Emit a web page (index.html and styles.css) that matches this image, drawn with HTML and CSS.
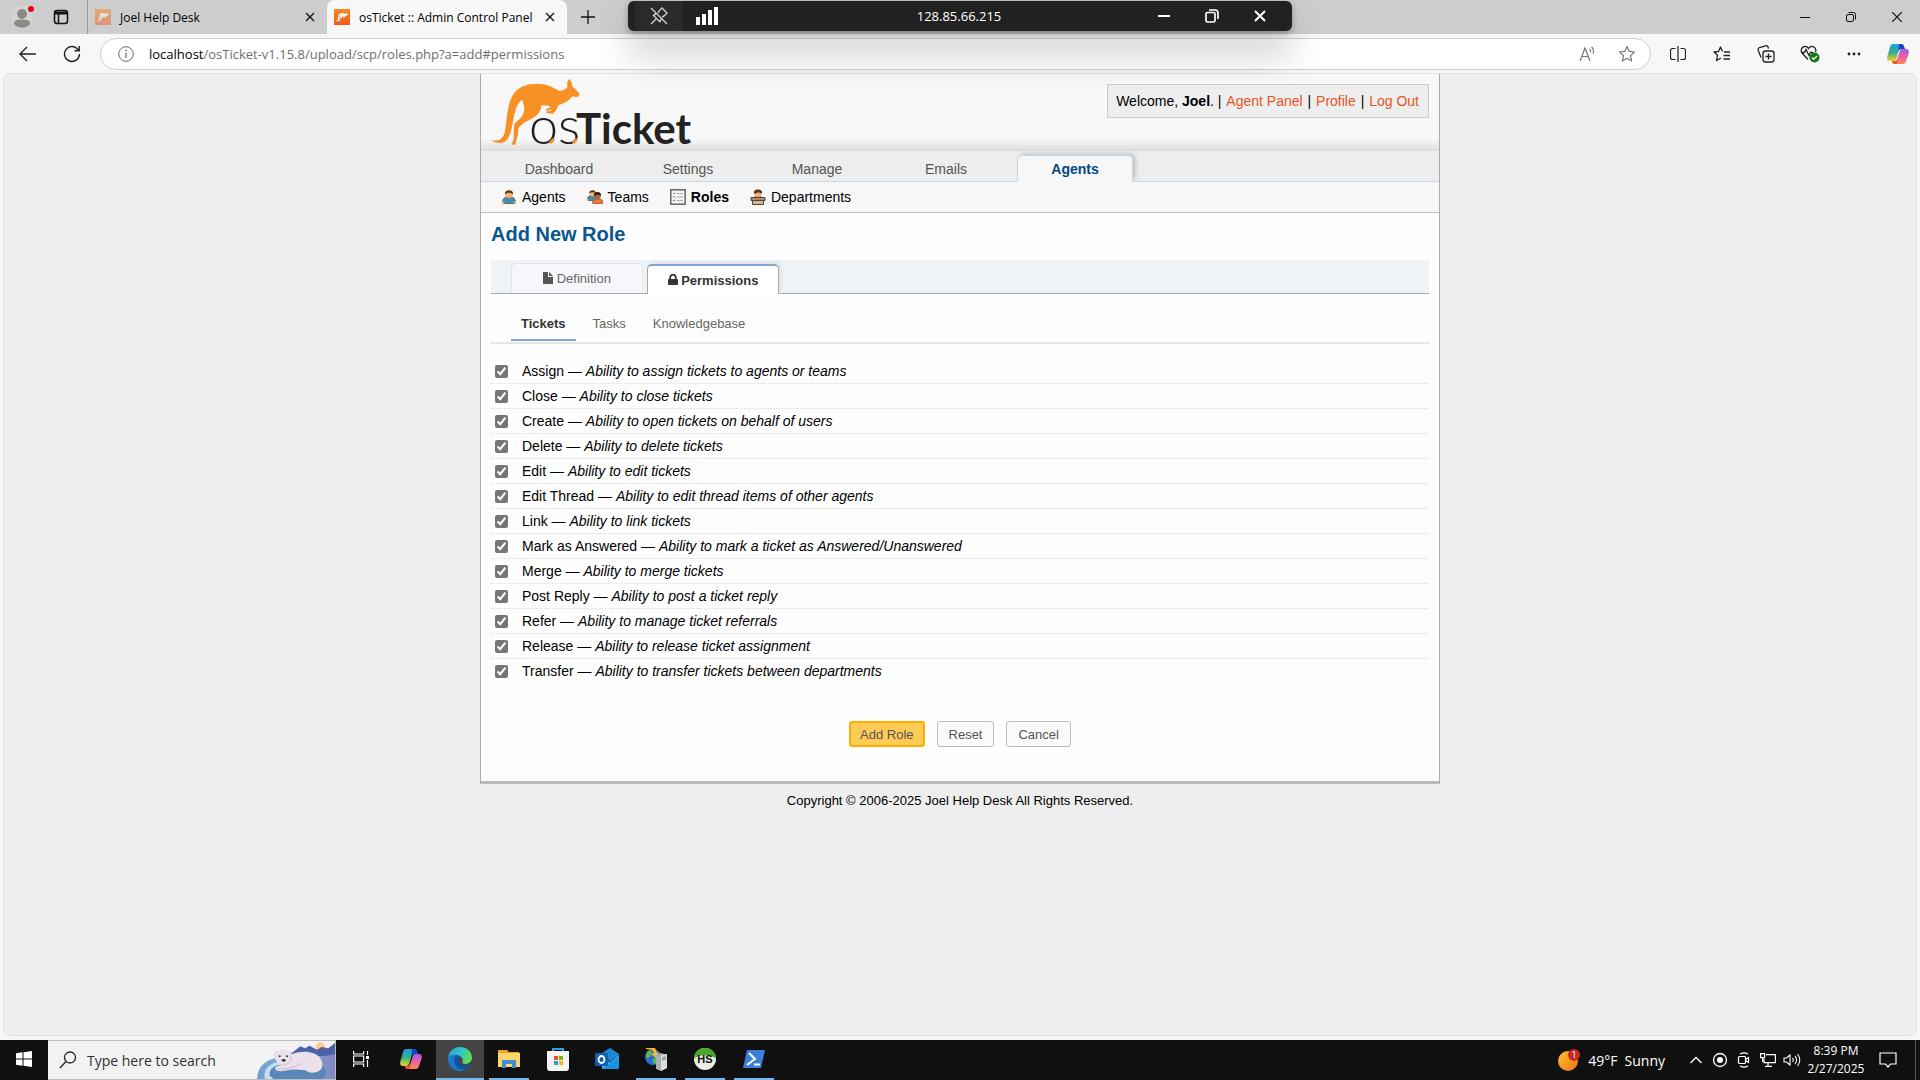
FILE: index.html
```html
<!DOCTYPE html>
<html lang="en">
<head>
<meta charset="utf-8">
<title>osTicket :: Admin Control Panel</title>
<link rel="stylesheet" href="styles.css">
</head>
<body>
<svg class="defs" aria-hidden="true">
  <defs>
    <symbol id="roo" viewBox="30 24 272 204">
      <path d="M30 209C52 216 68 210 74 185C81 150 80 105 98 75C114 49 142 40 175 41C204 42 218 52 236 62C250 63 260 58 262 49C259 39 263 31 267 27C273 32 276 40 276 49C285 55 290 63 298 71C298 82 288 82 278 79C270 86 264 94 250 100L234 106C231 117 226 126 218 131L202 130C197 128 196 124 201 124L212 123L215 118L202 122C194 122 196 117 201 116C209 115 211 110 207 107L184 106C181 126 170 140 151 148C136 156 121 164 114 178C116 196 108 208 106 222C103 227 96 225 95 221C104 205 99 184 102 164C109 151 128 145 131 124C136 108 126 101 128 89C112 94 105 119 99 151C93 190 85 218 61 219C50 219 38 215 30 209Z"/>
    </symbol>
    <linearGradient id="fav" x1="0" y1="0" x2="0" y2="1"><stop offset="0" stop-color="#f58a1f"/><stop offset="1" stop-color="#f05a22"/></linearGradient>
    <symbol id="favicon" viewBox="0 0 16 16">
      <rect width="16" height="16" fill="url(#fav)"/>
      <use href="#roo" x="2" y="2" width="12" height="12" fill="#fff" stroke="#fff" stroke-width="8"/>
    </symbol>
    <linearGradient id="cpA" x1="0" y1="0" x2="0" y2="1"><stop offset="0" stop-color="#1b9de8"/><stop offset=".5" stop-color="#37b08a"/><stop offset="1" stop-color="#f4cf1c"/></linearGradient>
    <linearGradient id="cpB" x1="0" y1="0" x2="0" y2="1"><stop offset="0" stop-color="#a15ce8"/><stop offset=".5" stop-color="#e95fa5"/><stop offset="1" stop-color="#ff8a4c"/></linearGradient>
    <symbol id="copilot" viewBox="0 0 24 24">
      <path d="M7 2h8c2 0 2.600 1 3.200 3l.6 2h-3c-2 0-3 1-3.600 3l-1.700 6c-.7 2-1.500 3-3.500 3H4C1.500 19 .6 17 1.300 14.500L4 5C4.700 3 5.500 2 7 2Z" fill="url(#cpA)"/>
      <path d="M13 2h2c2 0 2.600 1 3.200 3l.6 2h-3c-2 0-3 .8-3.600 2.500Z" fill="#1546c0"/>
      <path d="M17 22H9c-2 0-2.600-1-3.200-3h2.500c2 0 2.700-1 3.300-3l1.800-6c.6-2 1.400-3 3.400-3H20c2.500 0 3.400 2 2.700 4.500L20 19c-.7 2-1.500 3-3 3Z" fill="url(#cpB)"/>
      <path d="M11 22H9c-2 0-2.600-1-3.200-3h2.500c1.500 0 2.300-.6 2.900-2Z" fill="#f0512f"/>
    </symbol>
    <symbol id="agent" viewBox="0 0 14 14">
      <path d="M1 13c-1-3 1-5.500 3.500-6h5C12 7.500 14 10 13 13l-2 1H3Z" fill="#4d8aa8" stroke="#28546b" stroke-width=".8"/>
      <circle cx="7" cy="4.500" r="3.600" fill="#f0b27a"/>
      <path d="M3 4.500C2.500 1.500 4.500.3 7 .3s4.500 1.200 4 4.200C9.500 2.800 8 3 6 2.800 5 3 4 3.500 3 4.500Z" fill="#5b3413"/>
      <circle cx="1.300" cy="12.300" r="1.200" fill="#e8a46b"/><circle cx="12.700" cy="12.300" r="1.200" fill="#e8a46b"/>
    </symbol>
  </defs>
</svg>

<header class="tabstrip">
  <div class="lead">
    <button class="plain" aria-label="Profile">
      <svg width="26" height="26" viewBox="0 0 26 26"><circle cx="12" cy="13" r="11" fill="#d6d4d1"/><circle cx="12" cy="10" r="5" fill="#8d8a87"/><path d="M4 20c0-4 3-4.500 8-4.500s8 .5 8 4.500c-4 5-12 5-16 0Z" fill="#8d8a87"/><circle cx="21" cy="5" r="3" fill="#e30613"/></svg>
    </button>
    <button class="plain" aria-label="Workspaces">
      <svg width="16" height="16" viewBox="0 0 16 16" fill="none" stroke="#111" stroke-width="1.500"><rect x="1.500" y="1.500" width="13" height="13" rx="2.500"/><path d="M1.500 4h13" stroke-width="3"/><path d="M5.500 4v10"/></svg>
    </button>
  </div>
  <div class="tab tab-idle">
    <svg class="faded" width="16" height="16"><use href="#favicon"/></svg>
    <span class="tab-title">Joel Help Desk</span>
    <button class="plain" aria-label="Close tab"><svg width="10" height="10" viewBox="0 0 10 10" stroke="#111" stroke-width="1.300"><path d="M1 1l8 8M9 1l-8 8"/></svg></button>
  </div>
  <div class="tab tab-current">
    <svg width="16" height="16"><use href="#favicon"/></svg>
    <span class="tab-title">osTicket :: Admin Control Panel</span>
    <button class="plain" aria-label="Close tab"><svg width="10" height="10" viewBox="0 0 10 10" stroke="#111" stroke-width="1.300"><path d="M1 1l8 8M9 1l-8 8"/></svg></button>
  </div>
  <button class="plain new-tab" aria-label="New tab"><svg width="14" height="14" viewBox="0 0 14 14" stroke="#111" stroke-width="1.300"><path d="M7 0v14M0 7h14"/></svg></button>
  <div class="window-buttons">
    <button class="plain" aria-label="Minimize"><svg width="10" height="10" viewBox="0 0 10 10" stroke="#111"><path d="M0 5.500h10"/></svg></button>
    <button class="plain" aria-label="Restore"><svg width="10" height="10" viewBox="0 0 10 10" fill="none" stroke="#111"><rect x=".5" y="2.500" width="7" height="7" rx="1.500"/><path d="M2.500.5h5a2 2 0 0 1 2 2v5"/></svg></button>
    <button class="plain" aria-label="Close"><svg width="10" height="10" viewBox="0 0 10 10" stroke="#111" stroke-width="1.200"><path d="M0 0l10 10M10 0L0 10"/></svg></button>
  </div>
</header>

<div class="toolbar">
  <button class="plain nav-button" aria-label="Back"><svg width="18" height="16" viewBox="0 0 18 16" fill="none" stroke="#222" stroke-width="1.400"><path d="M17 8H1.500M8 1L1 8l7 7"/></svg></button>
  <button class="plain nav-button" aria-label="Refresh"><svg width="18" height="18" viewBox="0 0 18 18" fill="none" stroke="#222" stroke-width="1.400"><path d="M16.500 9a7.500 7.500 0 1 1-2.500-5.600L16 5.500M16.200 1v4.700h-4.700"/></svg></button>
  <div class="address">
    <svg width="16" height="16" viewBox="0 0 16 16" fill="none" stroke="#6b6b6b"><circle cx="8" cy="8" r="7.300"/><path d="M8 7v5" stroke-width="1.300"/><circle cx="8" cy="4.500" r=".5" fill="#6b6b6b"/></svg>
    <span class="url"><span class="host">localhost</span>/osTicket-v1.15.8/upload/scp/roles.php?a=add#permissions</span>
    <button class="plain" aria-label="Read aloud"><svg width="18" height="16" viewBox="0 0 18 16" fill="none" stroke="#777" stroke-width="1.200"><path d="M1 15L6 2l5 13M3 10.500h6M10.500 3c1 .7 1.300 2 1 3.500M12.500 1c2 1.500 2.500 4 1.500 6.500"/></svg></button>
    <button class="plain" aria-label="Add to favorites"><svg width="18" height="18" viewBox="0 0 18 18" fill="none" stroke="#777" stroke-width="1.200" stroke-linejoin="round"><path d="M9 1.500l2.200 4.900 5.300.6-4 3.600 1.100 5.300L9 13.200l-4.600 2.700 1.100-5.300-4-3.600 5.300-.6Z"/></svg></button>
  </div>
  <div class="tools">
    <button class="plain" aria-label="Split screen"><svg width="16" height="16" viewBox="0 0 16 16" fill="none" stroke="#222" stroke-width="1.200"><path d="M5.500 2.500H2.500a2 2 0 0 0-2 2v7a2 2 0 0 0 2 2h3M10.500 2.500h3a2 2 0 0 1 2 2v7a2 2 0 0 1-2 2h-3M8 0v16"/></svg></button>
    <button class="plain" aria-label="Favorites"><svg width="18" height="16" viewBox="0 0 18 16" fill="none" stroke="#222" stroke-width="1.300" stroke-linejoin="round"><path d="M9.500 5.500L7.500 1l-2 4.500L1 6l3.500 3.200-1 5.300 4.500-2.500M11 6h6M10.500 9.500H17M10.500 13H17"/></svg></button>
    <button class="plain" aria-label="Collections"><svg width="18" height="18" viewBox="0 0 18 18" fill="none" stroke="#222" stroke-width="1.300"><rect x="6" y="6" width="11" height="11" rx="2.500"/><path d="M11.500 8.500v6M8.500 11.500h6M4 12.500L1.300 5.500C.8 4 1.300 3 2.500 2.500L8.500.8C10 .4 11 1 11.500 3.500"/></svg></button>
    <button class="plain" aria-label="Browser essentials"><svg width="20" height="18" viewBox="0 0 20 18" fill="none" stroke="#222" stroke-width="1.300"><path d="M8 14.500L2 8C.5 6 1 3 3.500 1.800 5.500 1 7.500 2 8.500 3.500 9.500 2 11.500 1 13.500 1.800 15.500 3 16.300 5 15.500 7M1.500 7.500h3l1.500-3 3 6 1.500-3H13"/><circle cx="14.500" cy="12.500" r="5" fill="#107c10" stroke="none"/><path d="M12 12.500l1.800 1.800 3.200-3.300" stroke="#fff"/></svg></button>
    <button class="plain" aria-label="Settings and more"><svg width="14" height="4" viewBox="0 0 14 4" fill="#222"><circle cx="2" cy="2" r="1.400"/><circle cx="7" cy="2" r="1.400"/><circle cx="12" cy="2" r="1.400"/></svg></button>
    <button class="plain" aria-label="Copilot"><svg width="24" height="24"><use href="#copilot"/></svg></button>
  </div>
</div>

<div class="remote-bar">
  <button class="plain pin" aria-label="Unpin"><svg width="18" height="18" viewBox="0 0 18 18" fill="none" stroke="#ccc" stroke-width="1.400"><path d="M1 1l16 16M1 17l5-5M3 8l7 7M3.500 8L6 7M10 15l1-3M9 4l3-3 5 5-3 3M9 4L8 6M14 9l-2 1"/></svg></button>
  <svg class="signal" width="22" height="18" viewBox="0 0 22 18" fill="#fff"><path d="M0 10h4v8H0zM6 7h4v11H6zM12 3h4v15h-4zM18 0h4v18h-4z"/></svg>
  <span class="remote-host">128.85.66.215</span>
  <button class="plain remote-button" aria-label="Minimize"><svg width="12" height="12" viewBox="0 0 12 12" stroke="#fff" stroke-width="2"><path d="M0 6h12"/></svg></button>
  <button class="plain remote-button" aria-label="Restore"><svg width="14" height="14" viewBox="0 0 14 14" fill="none" stroke="#fff" stroke-width="1.700"><rect x="1" y="3.500" width="9" height="9.500" rx="1.500"/><path d="M4 1h6a3 3 0 0 1 3 3v6"/></svg></button>
  <button class="plain remote-button" aria-label="Close"><svg width="12" height="12" viewBox="0 0 12 12" stroke="#fff" stroke-width="2"><path d="M1 1l10 10M11 1L1 11"/></svg></button>
</div>

<main class="viewport">
  <div class="container">
    <div class="masthead">
      <a class="logo" href="#" aria-label="osTicket">
        <svg width="210" height="72" viewBox="0 0 210 72">
          <use href="#roo" width="91" height="68" fill="#f79125"/>
          <text class="logo-os" x="39" y="66">os</text>
          <text class="logo-ticket" x="86" y="66">Ticket</text>
          <path d="M60 65l4-4M83 65l4-4" stroke="#f79125" stroke-width="3"/>
        </svg>
      </a>
      <p class="welcome">Welcome, <strong>Joel</strong>. | <a href="#">Agent Panel</a> | <a href="#">Profile</a> | <a href="#">Log Out</a></p>
    </div>
    <nav class="main-nav">
      <a href="#">Dashboard</a>
      <a href="#">Settings</a>
      <a href="#">Manage</a>
      <a href="#">Emails</a>
      <a class="active" href="#">Agents</a>
    </nav>
    <nav class="sub-nav">
      <a href="#"><svg width="16" height="14"><use href="#agent"/></svg>Agents</a>
      <a href="#"><svg width="16" height="14" viewBox="0 0 16 14"><use href="#agent" width="11" height="11"/><path d="M6 14c-1-3 1-5 3-5h3c3 0 4 2 4 4l-2 1Z" fill="#ee7538" stroke="#a3431a" stroke-width=".8"/><circle cx="10.500" cy="6" r="3.200" fill="#a06a3c"/><path d="M7 6c-.5-3 1.500-4 3.500-4S14.500 3 14 6c-1-1.500-5-2-7 0Z" fill="#2e1c0e"/></svg>Teams</a>
      <a class="active" href="#"><svg width="16" height="16" viewBox="0 0 16 16" fill="none" stroke="#666"><rect x=".8" y=".8" width="14.400" height="14.400" fill="#f4f4f4" stroke-width="1.500"/><path d="M6.500 4.500H13M6.500 8H13M6.500 11.500H13" stroke="#aaa"/><path d="M3 4l1 1 1-1.500M3 7.500l1 1L5 7M3 11l1 1 1-1.500" stroke-width=".8"/></svg>Roles</a>
      <a href="#"><svg width="16" height="16" viewBox="0 0 16 16"><path d="M4 9l1-2h6l1 2Z" fill="#d5632c"/><circle cx="8" cy="4.500" r="3.500" fill="#f0b27a"/><path d="M4 5C3.500 1.500 5.500.5 8 .5S12.500 1.500 12 5c-2-2-5-2-8 0Z" fill="#5b3413"/><path d="M1 8.500h14v3H1z" fill="#a58c72" stroke="#55412f"/><path d="M2.500 11.500h11v4h-11z" fill="#cbb59b" stroke="#55412f"/></svg>Departments</a>
    </nav>
    <form class="content">
      <h2>Add New Role</h2>
      <div class="tabs">
        <a href="#"><svg width="10" height="12" viewBox="0 0 10 12" fill="#555"><path d="M0 0h5v5h5v7H0ZM6 0l4 4H6Z"/></svg> Definition</a>
        <a class="active" href="#"><svg width="10" height="12" viewBox="0 0 10 12"><rect x="0" y="5" width="10" height="6" rx="1" fill="#333"/><path d="M2.200 6V3.500a2.800 2.800 0 0 1 5.600 0V6" fill="none" stroke="#333" stroke-width="1.800"/></svg> Permissions</a>
      </div>
      <div class="subtabs">
        <a class="active" href="#">Tickets</a>
        <a href="#">Tasks</a>
        <a href="#">Knowledgebase</a>
      </div>
      <ul class="permissions">
        <li><label><input type="checkbox" checked><span>Assign — <em>Ability to assign tickets to agents or teams</em></span></label></li>
        <li><label><input type="checkbox" checked><span>Close — <em>Ability to close tickets</em></span></label></li>
        <li><label><input type="checkbox" checked><span>Create — <em>Ability to open tickets on behalf of users</em></span></label></li>
        <li><label><input type="checkbox" checked><span>Delete — <em>Ability to delete tickets</em></span></label></li>
        <li><label><input type="checkbox" checked><span>Edit — <em>Ability to edit tickets</em></span></label></li>
        <li><label><input type="checkbox" checked><span>Edit Thread — <em>Ability to edit thread items of other agents</em></span></label></li>
        <li><label><input type="checkbox" checked><span>Link — <em>Ability to link tickets</em></span></label></li>
        <li><label><input type="checkbox" checked><span>Mark as Answered — <em>Ability to mark a ticket as Answered/Unanswered</em></span></label></li>
        <li><label><input type="checkbox" checked><span>Merge — <em>Ability to merge tickets</em></span></label></li>
        <li><label><input type="checkbox" checked><span>Post Reply — <em>Ability to post a ticket reply</em></span></label></li>
        <li><label><input type="checkbox" checked><span>Refer — <em>Ability to manage ticket referrals</em></span></label></li>
        <li><label><input type="checkbox" checked><span>Release — <em>Ability to release ticket assignment</em></span></label></li>
        <li><label><input type="checkbox" checked><span>Transfer — <em>Ability to transfer tickets between departments</em></span></label></li>
      </ul>
      <div class="actions">
        <button class="primary" type="submit">Add Role</button>
        <button type="reset">Reset</button>
        <button type="button">Cancel</button>
      </div>
    </form>
  </div>
  <footer class="copyright">Copyright © 2006-2025 Joel Help Desk All Rights Reserved.</footer>
</main>

<div class="taskbar">
  <button class="plain task start" aria-label="Start"><svg width="16" height="16" viewBox="0 0 16 16" fill="#fff"><path d="M0 2.300L6.500 1.300v6.200H0ZM7.500 1.200L16 0v7.500H7.500ZM0 8.500h6.500v6.200L0 13.700ZM7.500 8.500H16V16l-8.500-1.200Z"/></svg></button>
  <label class="search">
    <svg width="18" height="18" viewBox="0 0 18 18" fill="none" stroke="#222" stroke-width="1.300"><circle cx="11" cy="6.500" r="5.500"/><path d="M7 10.500L1 17"/></svg>
    <input type="text" placeholder="Type here to search" aria-label="Search">
    <svg class="bear" width="78" height="38" viewBox="0 0 234 114">
      <defs><linearGradient id="ice" x1="0" y1="0" x2="1" y2="0"><stop offset="0" stop-color="#6f9fd0"/><stop offset=".5" stop-color="#8fb0dc"/><stop offset="1" stop-color="#7f86c4"/></linearGradient></defs>
      <circle cx="190" cy="18" r="14" fill="#ffc994"/>
      <path d="M100 40L130 16l14 6 14-8 22 12 14-8 20 4 20-16v44Z" fill="#4c62a8"/>
      <path d="M0 114C2 80 20 58 60 50h110l64-10v74Z" fill="url(#ice)"/>
      <path d="M24 114C16 90 34 66 66 62L90 72 60 114Z" fill="#c8dcf0"/>
      <path d="M38 104C34 80 60 70 84 70h100c30 10 30 30 10 44H50Z" fill="#5a86b8"/>
      <path d="M52 44C48 34 56 26 64 32 74 24 88 24 94 30 104 28 104 38 100 42 130 26 176 30 190 52 202 72 196 90 176 94 160 98 150 92 146 88 124 86 104 84 92 88 76 92 54 92 54 82 58 74 70 74 76 70 62 68 54 58 52 44Z" fill="#ece0ea"/>
      <circle cx="68" cy="46" r="3" fill="#333"/><circle cx="90" cy="46" r="3" fill="#333"/><ellipse cx="80" cy="58" rx="6" ry="4" fill="#333"/>
      <path d="M100 44c6 14 0 24-22 28M60 84c30 2 60-6 76-18" fill="none" stroke="#cbb9cf" stroke-width="3"/>
    </svg>
  </label>
  <button class="plain task task-view" aria-label="Task View"><svg width="16" height="16" viewBox="0 0 16 16" fill="none" stroke="#fff" stroke-width="1.200"><path d="M.6 0v3h10V0M.6 16v-3h10v3M.6 5h10v6H.6zM14.500 0v4M14.500 9v7"/><path d="M13 5h3v3h-3z" fill="#fff" stroke="none"/></svg></button>
  <button class="plain task" aria-label="Copilot"><svg width="24" height="24"><use href="#copilot"/></svg></button>
  <button class="plain task open focused" aria-label="Edge"><svg width="24" height="24" viewBox="0 0 24 24"><defs><linearGradient id="eg" x1="0" y1="0" x2="1" y2=".3"><stop offset="0" stop-color="#2a9fe0"/><stop offset=".6" stop-color="#2fc5c0"/><stop offset="1" stop-color="#62d95a"/></linearGradient></defs><path d="M12 0C19 0 24 5 24 10.500c0 4-3 6.500-7 6.500-2 0-3-.7-2.500-2 1-3-1-6-5-6C5 9 1 11 0 14 0 5 5 0 12 0Z" fill="url(#eg)"/><path d="M0 12C1 8 5 7 9 8c-3 2-3.500 6-1.500 9.500C9 21 13 23 18 22c-2 1.500-4 2-6 2C5 24 0 18.500 0 12Z" fill="#1878cc"/><path d="M9 8c-3 2-3.500 6-1.500 9.500C9.500 22 15 23.500 19 21.500c2-1 3.500-2.500 4-4-5 2.500-10 1.500-12-2-1-3 0-4.500 1.500-5.500-1-1.500-2.500-2-3.500-2Z" fill="#12539f"/></svg></button>
  <button class="plain task open" aria-label="File Explorer"><svg width="22" height="20" viewBox="0 0 22 20"><path d="M0 1h9l2 2h10v6H0Z" fill="#e9a523"/><path d="M0 4h22v14H0Z" fill="#ffd56a"/><path d="M4 19v-8h14v8h-4v-4H8v4Z" fill="#3f8fd6"/></svg></button>
  <button class="plain task" aria-label="Microsoft Store"><svg width="24" height="24" viewBox="0 0 24 24"><path d="M7 5V2h10v3" fill="none" stroke="#2aa1e6" stroke-width="2"/><path d="M1 4h22v17a3 3 0 0 1-3 3H4a3 3 0 0 1-3-3Z" fill="#f4f4f4"/><path d="M8 9h4v4H8z" fill="#e94b25"/><path d="M13 9h4v4h-4z" fill="#7cb900"/><path d="M8 14h4v4H8z" fill="#22a0ea"/><path d="M13 14h4v4h-4z" fill="#fcb813"/></svg></button>
  <button class="plain task" aria-label="Outlook"><svg width="26" height="24" viewBox="0 0 26 24"><path d="M6 7L16 1l9 6v14H8Z" fill="#1368b4"/><path d="M10 5l6-4 9 6-9 7Z" fill="#1f86d0"/><path d="M8 22V12l8 4 9-8v12a2 2 0 0 1-2 2Z" fill="#39b5ee"/><path d="M8 22L25 10v10a2 2 0 0 1-2 2Z" fill="#1b94dd"/><rect x="1" y="6" width="13" height="13" rx="1" fill="#0f5db5"/><ellipse cx="7.500" cy="12.500" rx="3" ry="3.500" fill="none" stroke="#fff" stroke-width="1.800"/></svg></button>
  <button class="plain task open" aria-label="Server Manager"><svg width="24" height="24" viewBox="0 0 24 24"><circle cx="9" cy="10" r="8" fill="#2e6dcc"/><path d="M3 5c4-3 6 0 4 3s-3 4-5 2ZM9 12c4-2 5 1 3 5l-3-1Z" fill="#5dbb4a"/><path d="M2 1h9l2 5 2-1-3 6-5-4 3-1-2-3-6-1Z" fill="#f5b82e"/><path d="M12 8l5-2 6 2v13l-6 3-5-2Z" fill="#a9afb3"/><path d="M17 8l6-1v14l-6 3Z" fill="#d9dde0"/><path d="M18 11l4-1M18 13l4-1" stroke="#777"/></svg></button>
  <button class="plain task open" aria-label="HS"><svg width="24" height="24" viewBox="0 0 24 24"><circle cx="12" cy="12" r="11" fill="#e9eee4"/><path d="M1 12C1 5 6 1 12 1s11 4 11 11C19 7 5 7 1 12Z" fill="#4da52a"/><text class="hs" x="12" y="16">HS</text></svg></button>
  <button class="plain task open" aria-label="PowerShell"><svg width="24" height="20" viewBox="0 0 24 20"><path d="M5 1h18l-4 18H1Z" fill="#3d7ed8"/><path d="M7 4l6 6-8 6" fill="none" stroke="#fff" stroke-width="2"/><path d="M12 15.500h6" stroke="#fff" stroke-width="2"/></svg></button>
  <div class="tray">
    <button class="plain weather"><svg width="24" height="24" viewBox="0 0 24 24"><defs><linearGradient id="sun" x1="0" y1="0" x2="1" y2="1"><stop offset="0" stop-color="#ffc02e"/><stop offset="1" stop-color="#f07412"/></linearGradient></defs><circle cx="11" cy="13" r="10" fill="url(#sun)"/><circle cx="17" cy="7" r="6" fill="#c92a20"/><text class="badge" x="17" y="10">1</text></svg><span>49°F</span><span>Sunny</span></button>
    <button class="plain tray-icon" aria-label="Show hidden icons"><svg width="12" height="8" viewBox="0 0 12 8" fill="none" stroke="#fff" stroke-width="1.300"><path d="M.5 7L6 1.500 11.500 7"/></svg></button>
    <button class="plain tray-icon" aria-label="Recording"><svg width="16" height="16" viewBox="0 0 16 16"><circle cx="8" cy="8" r="6.500" fill="none" stroke="#fff" stroke-width="1.300"/><circle cx="8" cy="8" r="3" fill="#fff"/></svg></button>
    <button class="plain tray-icon" aria-label="Meet Now"><svg width="14" height="16" viewBox="0 0 14 16" fill="none" stroke="#fff" stroke-width="1.200"><rect x="1.500" y="4.500" width="7" height="7" rx="1"/><path d="M8.500 7.500l3-2v5l-3-2M3 2c2.500-1.500 5.500-1.500 8 0M3 14c2.500 1.500 5.500 1.500 8 0"/></svg></button>
    <button class="plain tray-icon" aria-label="Network"><svg width="16" height="14" viewBox="0 0 16 14" fill="none" stroke="#fff" stroke-width="1.200"><path d="M6 1.600h9.400v8H4V6M8 10v3M5 13.400h7M.6.600h4v4h-4zM2.600 4.600V9"/></svg></button>
    <button class="plain tray-icon" aria-label="Volume"><svg width="18" height="14" viewBox="0 0 18 14" fill="none" stroke="#fff" stroke-width="1.100"><path d="M1 5h2.500L7 2v10L3.500 9H1ZM9.500 5c1 1 1 3 0 4M12 3c2 2 2 6 0 8M14.500 1c3 3.500 3 8.500 0 12"/></svg></button>
    <div class="clock"><span>8:39 PM</span><span>2/27/2025</span></div>
    <button class="plain notifications" aria-label="Notifications"><svg width="18" height="18" viewBox="0 0 18 18" fill="none" stroke="#fff" stroke-width="1.200"><path d="M1 2h16v11h-5.500L9 16l-2.500-3H1Z"/></svg></button>
  </div>
</div>
</body>
</html>
```

FILE: styles.css
```css
* {
  box-sizing: border-box;
}

body {
  margin: 0;
  min-height: 100vh;
  display: flex;
  flex-direction: column;
  background: #f7f7f7;
  color: #000;
  font-family: "Liberation Sans", Arial, sans-serif;
  font-size: 14px;
}

a {
  color: inherit;
  text-decoration: none;
}

.defs {
  position: absolute;
  width: 0;
  height: 0;
}

.plain {
  display: flex;
  align-items: center;
  justify-content: center;
  padding: 0;
  border: 0;
  background: none;
  color: inherit;
  font: inherit;
}

/* Browser frame */
.tabstrip {
  display: flex;
  height: 34px;
  background: #cdcdcd;
  font-family: "Open Sans", "Noto Sans", sans-serif;
  font-size: 12px;
}

.lead {
  display: flex;
  align-items: center;
  gap: 17px;
  width: 87px;
  padding-left: 10px;
}

.tab {
  display: flex;
  align-items: center;
  gap: 9px;
  width: 240px;
  padding: 0 12px 0 7px;
}

.tab-idle {
  border-left: 1px solid #999;
}

.tab-current {
  border-radius: 8px 8px 0 0;
  background: #f7f7f7;
}

.tab-title {
  flex: 1;
  white-space: nowrap;
}

.faded {
  opacity: 0.5;
}

.new-tab {
  width: 42px;
}

.window-buttons {
  display: flex;
  margin-left: auto;
}

.window-buttons .plain {
  width: 46px;
}

.toolbar {
  display: flex;
  align-items: center;
  height: 39px;
  padding-left: 6px;
}

.nav-button {
  width: 44px;
  height: 32px;
}

.address {
  display: flex;
  flex: 1;
  align-items: center;
  gap: 15px;
  height: 32px;
  margin: 0 5px 0 6px;
  padding: 0 11px 0 17px;
  border: 1px solid #cfcfcf;
  border-radius: 16px;
  background: #fff;
}

.address .plain {
  width: 24px;
}

.url {
  flex: 1;
  color: #6f6f6f;
  font-family: "Open Sans", "Noto Sans", sans-serif;
  font-size: 13px;
}

.host {
  color: #000;
}

.tools {
  display: flex;
}

.tools .plain {
  width: 44px;
  height: 32px;
}

/* Remote session bar, floats over the browser */
.remote-bar {
  position: absolute;
  top: 1px;
  left: 50%;
  display: flex;
  align-items: center;
  width: 664px;
  height: 30px;
  padding: 0 8px 0 7px;
  transform: translateX(-50%);
  border-radius: 6px;
  background: #212121;
  box-shadow: 0 24px 36px rgba(0, 0, 0, 0.2), 0 2px 6px rgba(0, 0, 0, 0.3);
  color: #fff;
  font-family: "Open Sans", "Noto Sans", sans-serif;
  font-size: 13px;
}

.pin {
  width: 48px;
  height: 30px;
  background: #2b2a28;
}

.signal {
  margin-left: 13px;
}

.remote-host {
  flex: 1;
  padding-left: 60px;
  text-align: center;
}

.remote-button {
  width: 48px;
  height: 30px;
}

/* Page */
.viewport {
  flex: 1;
  margin: 0 3px 4px;
  border: 1px solid #e0e0e0;
  border-radius: 8px;
  background: #eee;
}

.container {
  max-width: 960px;
  margin: 0 auto;
  border: 1px solid #aaa;
  border-top: 0;
  border-bottom: 3px solid #bbb;
  background: #fefefe;
}

.masthead {
  display: flex;
  align-items: flex-start;
  justify-content: space-between;
  height: 77px;
  padding: 4px 10px 0 9px;
  border-bottom: 1px solid #ddd;
  background: linear-gradient(#f8f8f8 85%, #dfdfdf);
}

.logo {
  display: block;
}

.logo svg {
  display: block;
  overflow: visible;
}

.logo-os {
  fill: #222;
  font-family: Lato, sans-serif;
  font-size: 52px;
  font-weight: 300;
}

.logo-ticket {
  fill: #222;
  font-family: Lato, sans-serif;
  font-size: 42px;
  font-weight: 700;
}

.welcome {
  margin: 6px 0 0;
  padding: 8px;
  border: 1px solid #ccc;
  background: #eee;
  line-height: 16px;
}

.welcome a {
  margin: 0 1px;
  color: #e65524;
}

.main-nav {
  display: flex;
  align-items: flex-end;
  gap: 13px;
  height: 31px;
  padding-left: 20px;
  border-bottom: 1px solid #c5d9ec;
  background: #ededed;
  color: #555;
}

.main-nav a {
  width: 116px;
  height: 26px;
  padding-top: 6px;
  line-height: 16px;
  text-align: center;
}

.main-nav .active {
  height: 27px;
  margin-bottom: -1px;
  padding-top: 5px;
  border: 1px solid #c5d9ec;
  border-bottom: 0;
  border-radius: 5px 5px 0 0;
  background: #f7f7f7;
  box-shadow: 3px -2px 5px -1px #bbb;
  clip-path: inset(-8px -8px 0 -8px);
  color: #004a80;
  font-weight: 700;
}

.sub-nav {
  display: flex;
  align-items: center;
  gap: 21px;
  height: 31px;
  padding-left: 20px;
  border-bottom: 1px solid #bebebe;
  background: #f7f7f7;
}

.sub-nav a {
  display: flex;
  align-items: center;
  gap: 5px;
}

.sub-nav .active {
  font-weight: 700;
}

.content {
  padding: 10px 10px 34px;
}

h2 {
  margin: 0 0 14px;
  color: #0a568e;
  font-size: 20px;
  line-height: 23px;
}

.tabs {
  display: flex;
  align-items: flex-end;
  gap: 4px;
  height: 34px;
  padding-left: 20px;
  border-bottom: 1px solid #aaa;
  background: #eef3f7;
  color: #666;
  font-size: 13px;
}

.tabs a {
  width: 132px;
  height: 30px;
  padding-top: 7px;
  border: 1px solid #e0e3e8;
  border-bottom: 0;
  border-radius: 5px 5px 0 0;
  background: #f6f7fb;
  line-height: 16px;
  text-align: center;
}

.tabs svg {
  vertical-align: -1px;
}

.tabs .active {
  margin-bottom: -1px;
  border-color: #aaa;
  border-top: 2px solid #7ea4d8;
  background: #fff;
  box-shadow: 2px -1px 4px #ddd;
  clip-path: inset(-8px -8px 0 -8px);
  color: #333;
  font-weight: 700;
}

.subtabs {
  display: flex;
  align-items: flex-start;
  gap: 7px;
  height: 50px;
  padding: 16px 0 0 20px;
  border-bottom: 2px solid #e5e5e5;
  color: #666;
  font-size: 13px;
}

.subtabs a {
  padding: 6px 10px;
  background: #fcfcfc;
  line-height: 16px;
}

.subtabs .active {
  height: 31px;
  border-bottom: 2px solid #7ea4d8;
  background: none;
  color: #333;
  font-weight: 700;
}

.permissions {
  margin: 15px 0 37px;
  padding: 0;
  list-style: none;
}

.permissions li {
  height: 25px;
  border-bottom: 1px dotted #ddd;
}

.permissions li:last-child {
  border-bottom: 0;
}

.permissions label {
  display: flex;
  align-items: center;
  gap: 14px;
  height: 24px;
  padding-left: 4px;
}

.permissions input {
  width: 13px;
  height: 13px;
  margin: 0;
  accent-color: #767676;
}

.actions {
  display: flex;
  justify-content: center;
  gap: 12px;
}

.actions button {
  height: 26px;
  padding: 0 11px;
  border: 1px solid #bbb;
  border-radius: 3px;
  background: #fafafa;
  color: #555;
  font: inherit;
  font-size: 13px;
}

.actions .primary {
  padding: 0 9px;
  border: 2px solid #ffad00;
  background: #ffcb57;
}

.copyright {
  margin-top: 9px;
  font-size: 13px;
  line-height: 16px;
  text-align: center;
}

/* Taskbar */
.taskbar {
  display: flex;
  align-items: stretch;
  gap: 1px;
  height: 40px;
  background: #101010;
  color: #fff;
  font-family: "Open Sans", "Noto Sans", sans-serif;
}

.task {
  width: 48px;
  border-bottom: 2px solid transparent;
}

.start {
  width: 47px;
}

.task-view {
  margin-right: 1px;
}

.open {
  width: 40px;
  margin: 0 4px;
  border-bottom-color: #76b9ed;
}

.focused {
  width: 48px;
  margin: 0;
  background: #454545;
}

.search {
  display: flex;
  align-items: center;
  gap: 10px;
  width: 288px;
  padding-left: 11px;
  border: 1px solid #bbb;
  border-left: 0;
  background: #f2f2f2;
}

.search input {
  flex: 1;
  min-width: 0;
  padding: 0;
  border: 0;
  background: none;
  font-family: inherit;
  font-size: 14px;
}

.search input::placeholder {
  color: #333;
}

.tray {
  display: flex;
  align-items: center;
  margin-left: auto;
  padding-right: 4px;
}

.weather {
  gap: 7px;
  margin-right: 19px;
  font-size: 14px;
}

.tray-icon {
  width: 24px;
  height: 40px;
}

.clock {
  display: flex;
  flex-direction: column;
  width: 64px;
  font-size: 12px;
  line-height: 18px;
  text-align: center;
}

.notifications {
  width: 48px;
  height: 40px;
  padding-right: 8px;
  border-right: 1px solid #555;
}

.hs {
  fill: #111;
  font-family: "Liberation Sans", sans-serif;
  font-size: 11px;
  font-weight: 700;
  text-anchor: middle;
}

.badge {
  fill: #fff;
  font-size: 9px;
  text-anchor: middle;
}
```
